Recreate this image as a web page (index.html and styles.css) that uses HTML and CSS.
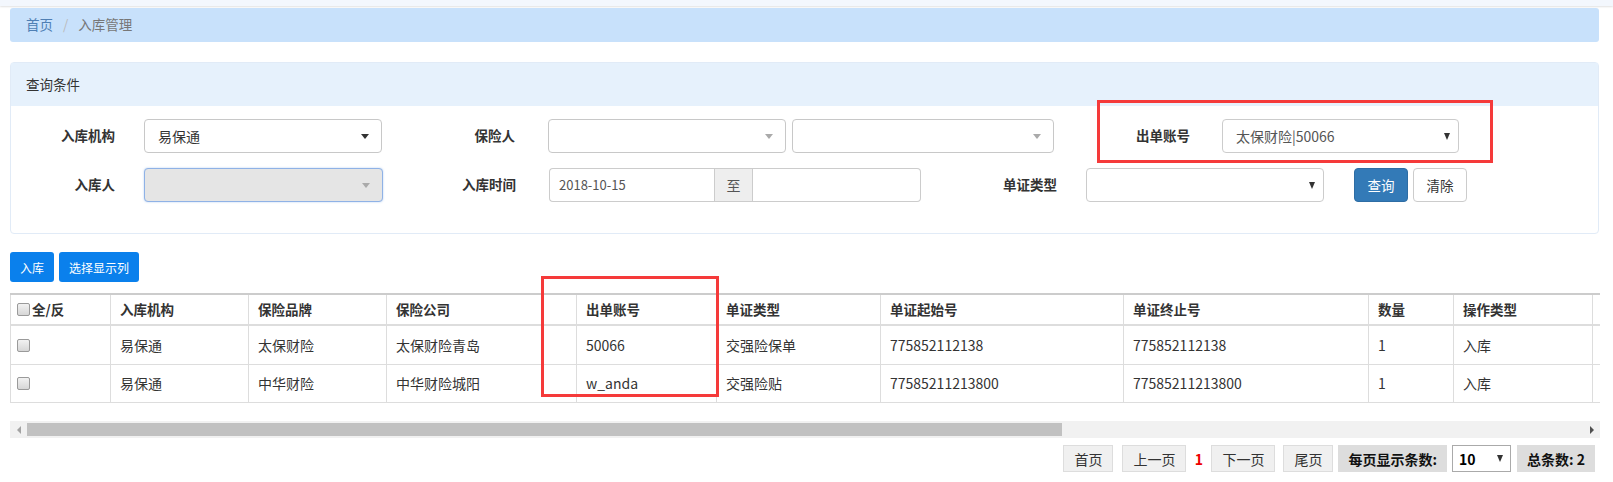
FILE: index.html
```html
<!DOCTYPE html>
<html lang="zh-CN">
<head>
  <meta charset="UTF-8">
  <meta name="viewport" content="width=device-width, initial-scale=1.0">
  <title>入库管理</title>
  <link rel="stylesheet" href="styles.css">
</head>
<body>
  <div class="topbar"></div>
  <div class="main">
    <ol class="crumb">
      <li><a href="#">首页</a></li>
      <li class="active">入库管理</li>
    </ol>

    <div class="panel">
      <div class="panel-head">查询条件</div>
      <div class="panel-body">
        <div class="q-row">
          <label class="lbl lbl-1">入库机构</label>
          <div class="sel sel-s2 w-238 ml-29"><span>易保通</span><i class="caret"></i></div>
          <label class="lbl lbl-2">保险人</label>
          <div class="sel sel-s2 w-238 ml-33"><span></span><i class="caret caret-light"></i></div>
          <div class="sel sel-s2 w-262 ml-6"><span></span><i class="caret caret-light"></i></div>
          <label class="lbl lbl-3">出单账号</label>
          <div class="sel sel-native w-237 ml-32"><span class="sel-val">太保财险|50066</span><i class="caret caret-native"></i></div>
        </div>
        <div class="q-row">
          <label class="lbl lbl-1">入库人</label>
          <div class="sel sel-s2 sel-disabled w-239 ml-29"><span></span><i class="caret caret-light"></i></div>
          <label class="lbl lbl-2">入库时间</label>
          <div class="dgroup ml-33">
            <span class="dinput d-from">2018-10-15</span>
            <span class="daddon">至</span>
            <span class="dinput d-to"></span>
          </div>
          <label class="lbl lbl-3">单证类型</label>
          <div class="sel sel-native w-238 ml-29"><span></span><i class="caret caret-native"></i></div>
          <button type="button" class="btn btn-primary ml-30">查询</button>
          <button type="button" class="btn btn-default ml-5">清除</button>
        </div>
      </div>
    </div>

    <div class="toolbar">
      <button type="button" class="btn-blue">入库</button>
      <button type="button" class="btn-blue">选择显示列</button>
    </div>

    <div class="grid">
      <table>
        <colgroup>
          <col style="width:100px"><col style="width:138px"><col style="width:138px"><col style="width:190px">
          <col style="width:140px"><col style="width:164px"><col style="width:243px"><col style="width:245px">
          <col style="width:85px"><col style="width:139px"><col style="width:808px">
        </colgroup>
        <thead>
          <tr>
            <th class="th-check"><span class="cbox"></span>全/反</th>
            <th>入库机构</th>
            <th>保险品牌</th>
            <th>保险公司</th>
            <th>出单账号</th>
            <th>单证类型</th>
            <th>单证起始号</th>
            <th>单证终止号</th>
            <th>数量</th>
            <th>操作类型</th>
            <th></th>
          </tr>
        </thead>
        <tbody>
          <tr>
            <td class="td-check"><span class="cbox"></span></td>
            <td>易保通</td>
            <td>太保财险</td>
            <td>太保财险青岛</td>
            <td>50066</td>
            <td>交强险保单</td>
            <td>775852112138</td>
            <td>775852112138</td>
            <td>1</td>
            <td>入库</td>
            <td></td>
          </tr>
          <tr>
            <td class="td-check"><span class="cbox"></span></td>
            <td>易保通</td>
            <td>中华财险</td>
            <td>中华财险城阳</td>
            <td>w_anda</td>
            <td>交强险贴</td>
            <td>77585211213800</td>
            <td>77585211213800</td>
            <td>1</td>
            <td>入库</td>
            <td></td>
          </tr>
        </tbody>
      </table>
    </div>

    <div class="hscroll">
      <i class="arr arr-left"></i>
      <div class="track"><div class="thumb"></div></div>
      <i class="arr arr-right"></i>
    </div>

    <div class="pager">
      <span class="pg-btn">首页</span>
      <span class="pg-btn ml-9">上一页</span>
      <span class="pg-cur">1</span>
      <span class="pg-btn">下一页</span>
      <span class="pg-btn ml-8">尾页</span>
      <span class="pg-info ml-5">每页显示条数:</span>
      <span class="pg-size ml-5">10<i class="caret caret-native"></i></span>
      <span class="pg-info ml-6">总条数: 2</span>
    </div>
  </div>

  <div class="mark mark-1"></div>
  <div class="mark mark-2"></div>
</body>
</html>
```

FILE: styles.css
```css
body {
  margin: 0;
  font-family: "Microsoft YaHei", "Noto Sans CJK SC", sans-serif;
  font-size: 13.5px;
  line-height: 1.42857;
  color: #333;
  background: #fff;
  position: relative;
}

.topbar {
  height: 6px;
  background: #f3f7fd;
  box-shadow: 0 1px 2px rgba(0, 0, 0, 0.12);
}

.main {
  padding: 2px 14px 0 10px;
}

/* breadcrumb */
.crumb {
  margin: 0;
  padding: 0 16px;
  list-style: none;
  display: flex;
  align-items: center;
  height: 34px;
  background: #c8e1fb;
  border-radius: 3px;
}

.crumb li + li::before {
  content: "/";
  color: #bbb;
  padding: 0 10px;
}

.crumb a {
  color: #4f7fb4;
  text-decoration: none;
}

.crumb .active {
  color: #777;
}

/* query panel */
.panel {
  margin-top: 20px;
  border: 1px solid #e1ebf7;
  border-radius: 4px;
}

.panel-head {
  height: 43px;
  line-height: 43px;
  padding: 0 15px;
  background: #e6f1fc;
}

.panel-body {
  padding: 13px 0 31px;
}

.q-row {
  display: flex;
  align-items: center;
  height: 34px;
}

.q-row + .q-row {
  margin-top: 15px;
}

.lbl {
  font-weight: bold;
  text-align: right;
  box-sizing: border-box;
}

.lbl-1 { width: 104px; }
.lbl-2 { width: 133px; }
.lbl-3 { width: 136px; }

.w-237 { width: 237px; }
.w-238 { width: 238px; }
.w-239 { width: 239px; }
.w-262 { width: 262px; }

.ml-5 { margin-left: 5px; }
.ml-6 { margin-left: 6px; }
.ml-8 { margin-left: 8px; }
.ml-9 { margin-left: 9px; }
.ml-29 { margin-left: 29px; }
.ml-30 { margin-left: 30px; }
.ml-32 { margin-left: 32px; }
.ml-33 { margin-left: 33px; }

.sel {
  height: 34px;
  box-sizing: border-box;
  border: 1px solid #ccc;
  border-radius: 4px;
  background: #fff;
  display: flex;
  align-items: center;
  justify-content: space-between;
  padding: 0 12px 0 13px;
  font-size: 14px;
}

.sel-s2 {
  border-color: #c8c8c8;
}

.sel-native {
  padding-right: 8px;
}

.sel-val {
  color: #555;
}

.sel-disabled {
  background: #e5e5e5;
  border-color: #8fb2e6;
  box-shadow: 0 0 2px rgba(102, 153, 230, 0.5);
}

.caret {
  width: 0;
  height: 0;
  border-top: 5px solid #333;
  border-left: 4px solid transparent;
  border-right: 4px solid transparent;
}

.caret-light {
  border-top-color: #aaa;
}

.caret-native {
  border-top: 7px solid #333;
  border-left: 3.5px solid transparent;
  border-right: 3.5px solid transparent;
}

.dgroup {
  display: flex;
  height: 34px;
  width: 372px;
}

.dinput,
.daddon {
  box-sizing: border-box;
  height: 34px;
  border: 1px solid #ccc;
  display: flex;
  align-items: center;
}

.dinput {
  padding: 0 9px;
  font-size: 13px;
  color: #555;
}

.d-from {
  width: 165px;
  border-radius: 4px 0 0 4px;
  border-right: 0;
}

.d-to {
  width: 168px;
  border-radius: 0 4px 4px 0;
  border-left: 0;
}

.daddon {
  width: 39px;
  justify-content: center;
  background: #eee;
  color: #555;
  font-size: 14px;
}

.btn {
  height: 34px;
  width: 54px;
  border-radius: 4px;
  font-family: inherit;
  font-size: 13.5px;
  padding: 0;
  cursor: pointer;
}

.btn-primary {
  background: #337ab7;
  border: 1px solid #2e6da4;
  color: #fff;
}

.btn-default {
  background: #fff;
  border: 1px solid #ccc;
  color: #333;
}

/* toolbar */
.toolbar {
  margin-top: 18px;
  display: flex;
  gap: 5px;
}

.btn-blue {
  height: 30px;
  padding: 0 10px;
  border: 0;
  border-radius: 3px;
  background: #0a80ec;
  color: #fff;
  font-family: inherit;
  font-size: 12px;
}

/* table */
.grid {
  margin-top: 11px;
  width: 1590px;
  overflow: hidden;
}

.grid table {
  border-collapse: collapse;
  table-layout: fixed;
  width: 2390px;
}

.grid th,
.grid td {
  border: 1px solid #ddd;
  padding: 0 9px;
  text-align: left;
  white-space: nowrap;
}

.grid th {
  height: 29px;
  border-top: 2px solid #ccc;
  border-bottom: 2px solid #ddd;
  font-size: 13.5px;
}

.grid td {
  height: 37.5px;
  font-size: 14px;
}

.grid .th-check,
.grid .td-check {
  padding-left: 6px;
}

.cbox {
  display: inline-block;
  width: 11px;
  height: 11px;
  border: 1px solid #9a9a9a;
  border-radius: 2px;
  background: linear-gradient(#f2f2f2, #d6d6d6);
  vertical-align: -1px;
  margin-right: 2px;
}

/* horizontal scrollbar */
.hscroll {
  margin-top: 18px;
  width: 1590px;
  height: 17px;
  background: #f1f1f1;
  display: flex;
  align-items: center;
}

.arr {
  width: 17px;
  height: 17px;
  display: flex;
  align-items: center;
  justify-content: center;
}

.arr::before {
  content: "";
  border-top: 4px solid transparent;
  border-bottom: 4px solid transparent;
}

.arr-left::before {
  border-right: 4px solid #a3a3a3;
}

.arr-right::before {
  border-left: 4px solid #505050;
}

.track {
  flex: 1;
  height: 13px;
}

.thumb {
  width: 1035px;
  height: 13px;
  background: #c1c1c1;
}

/* pager */
.pager {
  width: 1585px;
  margin-top: 7px;
  display: flex;
  justify-content: flex-end;
  align-items: center;
  font-size: 14px;
}

.pg-btn,
.pg-info,
.pg-size {
  height: 27px;
  box-sizing: border-box;
  display: flex;
  align-items: center;
}

.pg-btn {
  padding: 0 10px;
  background: #f0f0f0;
  border: 1px solid #ddd;
  color: #333;
}

.pg-cur {
  width: 25px;
  text-align: center;
  color: #e00;
  font-weight: bold;
}

.pg-info {
  padding: 0 10px;
  background: #ddd;
  color: #111;
  font-weight: bold;
}

.pg-size {
  width: 59px;
  padding: 0 7px 0 6px;
  border: 1px solid #aaa;
  justify-content: space-between;
  font-weight: bold;
  color: #000;
}

/* annotation boxes */
.mark {
  position: absolute;
  border: 3px solid #f53a3a;
  box-sizing: border-box;
}

.mark-1 {
  left: 1097px;
  top: 100px;
  width: 396px;
  height: 63px;
}

.mark-2 {
  left: 541px;
  top: 276px;
  width: 178px;
  height: 121px;
}
```
